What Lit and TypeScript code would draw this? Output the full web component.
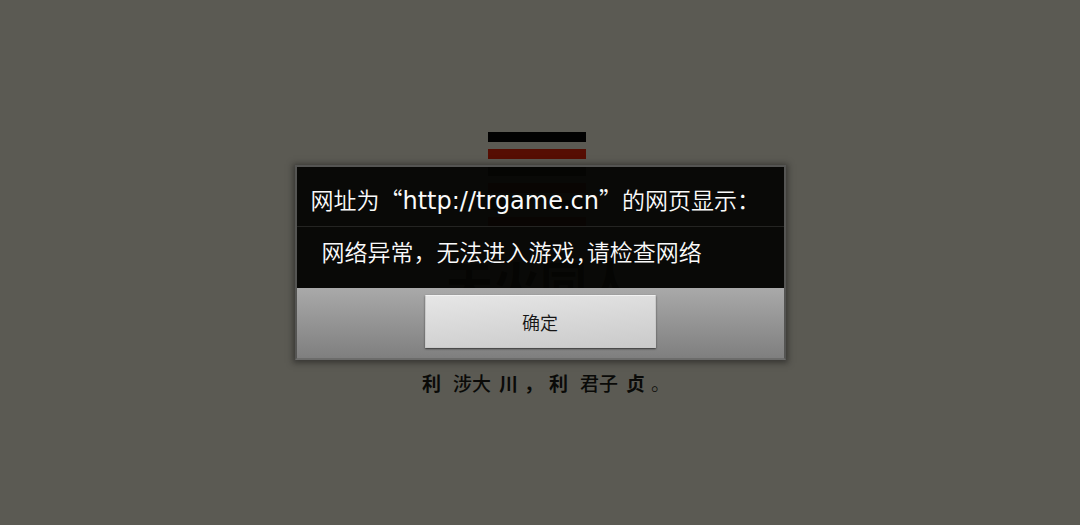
import { LitElement, html, css } from "lit";
import { customElement, state } from "lit/decorators.js";
import { classMap } from "lit/directives/class-map.js";

type Line = { tone: "black" | "red"; broken?: boolean };

const HEXAGRAM: Line[] = [
  { tone: "black" },
  { tone: "red" },
  { tone: "black" },
  { tone: "red" },
  { tone: "black", broken: true },
  { tone: "red" },
];

@customElement("splash-art")
class SplashArt extends LitElement {
  static styles = css`
    :host {
      display: flex;
      flex-direction: column;
      align-items: center;
      padding-top: 3px;
      color: #0a0a08;
      font-family: "Noto Sans CJK SC", sans-serif;
    }
    .hexagram {
      display: flex;
      flex-direction: column;
      gap: 7px;
      width: 98px;
      margin-right: 6px;
    }
    .line {
      display: flex;
      justify-content: space-between;
      height: 10px;
    }
    .bar {
      flex: 1;
      background: #020202;
    }
    .red .bar {
      background: #560e03;
    }
    .broken {
      gap: 26px;
    }
    .name {
      margin: 24px 0 0;
      font-size: 47px;
      line-height: 60px;
      font-weight: 700;
      color: #000;
    }
    .motto {
      display: flex;
      align-items: baseline;
      margin: 58px 0 0;
      padding-left: 12px;
      font-size: 19px;
      line-height: 28px;
      font-weight: 500;
    }
    .plain {
      margin: 0 8px 0 12px;
    }
    .brush {
      font-weight: 700;
    }
    .tight {
      margin-left: 6px;
    }
    .stop {
      font-weight: 300;
    }
  `;

  render() {
    return html`
      <div class="hexagram">
        ${HEXAGRAM.map(
          (l) => html`<div class=${classMap({ line: true, red: l.tone === "red", broken: !!l.broken })}>
            <span class="bar"></span>${l.broken ? html`<span class="bar"></span>` : ""}
          </div>`
        )}
      </div>
      <h1 class="name">天火同人</h1>
      <p class="motto">
        <span class="brush">利</span><span class="plain">涉大</span><span class="brush">川</span
        ><span class="brush tight">，</span><span class="brush tight">利</span><span class="plain">君子</span
        ><span class="brush">贞</span><span class="stop tight">。</span>
      </p>
    `;
  }
}

@customElement("alert-box")
class AlertBox extends LitElement {
  static styles = css`
    :host {
      display: block;
      box-sizing: border-box;
      width: 491px;
      max-width: 100%;
      border: 2px solid #555553;
      border-bottom-color: #6c6c6b;
      box-shadow: 0 1px 6px 2px rgba(20, 20, 20, 0.5);
      color: #fafafa;
      font-family: "Noto Sans CJK SC", sans-serif;
    }
    .title,
    .message {
      margin: 0;
      background: rgba(5, 5, 3, 0.95);
      font-weight: 350;
      font-size: 23px;
      line-height: 34px;
    }
    .title {
      padding: 15px 12px 10px 14px;
      border-bottom: 1px solid #242422;
      white-space: nowrap;
    }
    .url {
      font-family: "DejaVu Sans", sans-serif;
      font-size: 24px;
      font-weight: 400;
      line-height: 24px;
    }
    .message {
      padding: 7px 24px 20px 25px;
    }
    .comma {
      padding: 0 3px;
    }
    .actions {
      display: flex;
      justify-content: center;
      padding: 7px 16px 10px;
      background: linear-gradient(#a9a9a9, #7f7f7f);
    }
    .ok {
      width: 231px;
      height: 53px;
      padding: 0;
      border: 1px solid #c9c9c9;
      border-top-color: #f2f2f2;
      border-radius: 1px;
      background: linear-gradient(175deg, #e6e6e6, #cacaca);
      box-shadow: 0 1px 2px rgba(0, 0, 0, 0.6);
      color: #161616;
      font-family: inherit;
      font-size: 18px;
      font-weight: 350;
    }
  `;

  private close() {
    this.dispatchEvent(new CustomEvent("dismiss"));
  }

  render() {
    return html`
      <h2 class="title">网址为“<span class="url">http://trgame.cn</span>”的网页显示：</h2>
      <p class="message">网络异常，无法进入游戏<span class="comma">,</span>请检查网络</p>
      <div class="actions"><button class="ok" type="button" @click=${this.close}>确定</button></div>
    `;
  }
}

@customElement("app-root")
class AppRoot extends LitElement {
  static styles = css`
    :host {
      display: flex;
      align-items: center;
      justify-content: center;
      position: relative;
      min-height: 100vh;
      overflow: hidden;
      background: #5b5a53;
    }
    .overlay {
      position: absolute;
      inset: 0;
      display: flex;
      align-items: center;
      justify-content: center;
    }
  `;

  @state() private open = true;

  render() {
    return html`
      <splash-art></splash-art>
      ${this.open
        ? html`<div class="overlay">
            <alert-box role="alertdialog" @dismiss=${() => (this.open = false)}></alert-box>
          </div>`
        : ""}
    `;
  }
}
